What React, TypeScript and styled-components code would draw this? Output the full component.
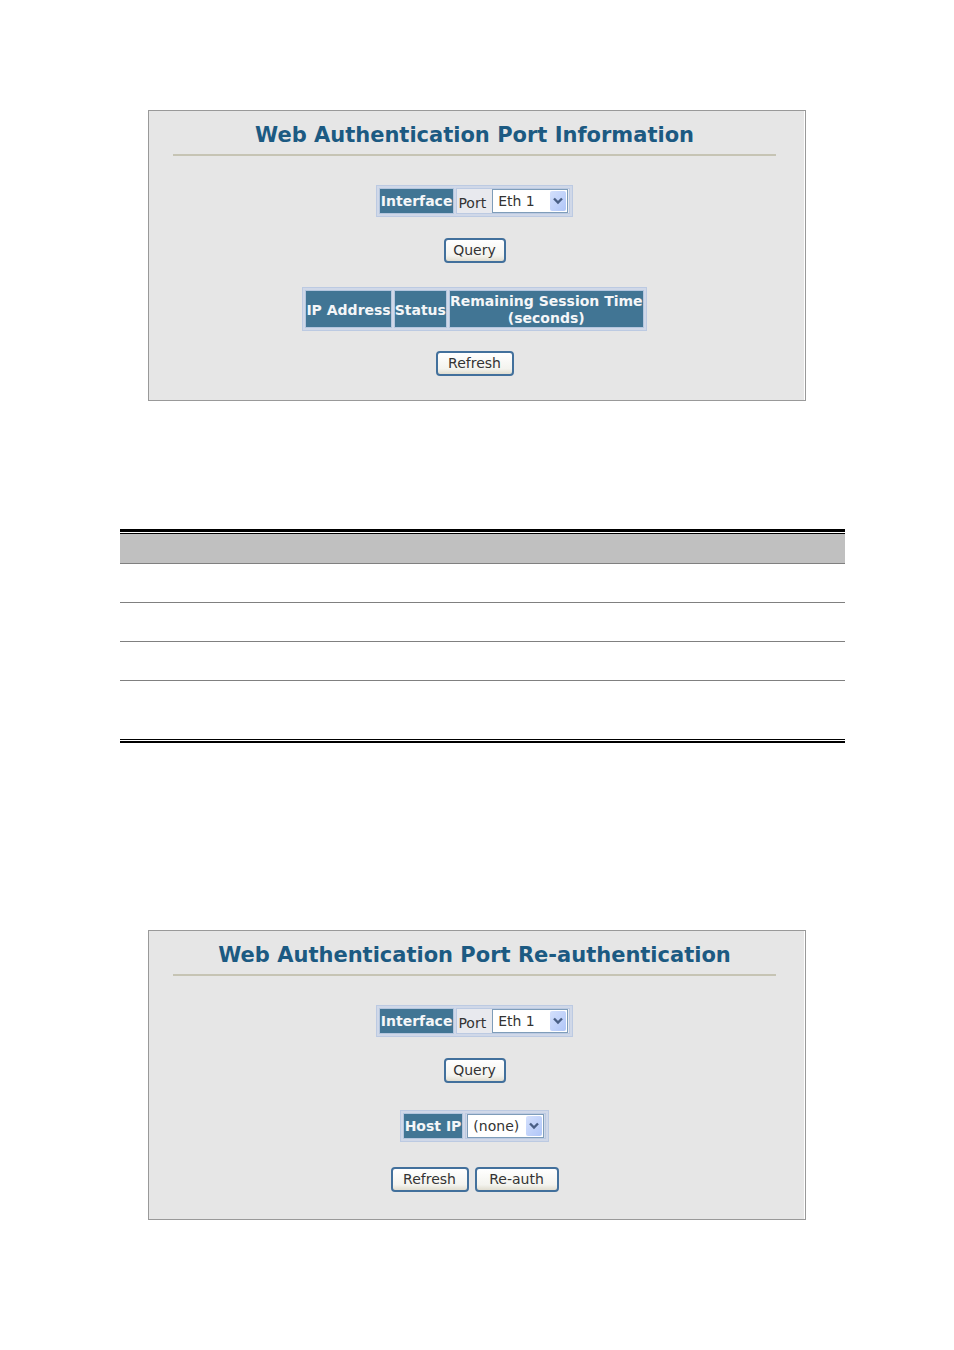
import React from "react";
import styled, { createGlobalStyle } from "styled-components";

const GlobalStyle = createGlobalStyle`
  * { box-sizing: border-box; }
  body {
    margin: 0;
    background: #fff;
    color: #333;
    font-family: "DejaVu Sans", Verdana, sans-serif;
    font-size: 14px;
    line-height: 17px;
  }
`;

const Page = styled.main`
  display: flex;
  flex-direction: column;
  padding: 110px 109px 130px 120px;
`;

const Panel = styled.section`
  display: flex;
  flex-direction: column;
  align-items: center;
  margin: 0 39px 0 28px;
  padding: 9px 29px 0 24px;
  border: 1px solid #999;
  background: #e6e6e6;
  box-shadow: inset -1px 0 #fff;
`;

const Title = styled.h1`
  align-self: stretch;
  margin: 0 0 29px;
  padding-bottom: 4px;
  border-bottom: 2px solid #c6c4b4;
  color: #1c5a82;
  font-size: 21px;
  line-height: 30px;
  text-align: center;
`;

const Grid = styled.table`
  border: 1px solid #bccae2;
  border-spacing: 2px;
  background: #d0d8e8;
`;

const HeadCell = styled.th`
  height: 26px;
  padding: 1px 1px 0;
  border: 1px solid #b4c6de;
  background: #417594;
  color: #f4f6f8;
  font-size: 14px;
  line-height: 17px;
  white-space: nowrap;

  &[scope="col"] { padding: 2px 0 0; }
`;

const FieldCell = styled.td<{ $plain?: boolean }>`
  padding: 0 1px;
  border: 1px solid #bccae2;
  background: ${(p) => (p.$plain ? "#d0d8e8" : "#e8e9ee")};
`;

const Field = styled.div`
  display: flex;
  align-items: center;
  gap: 6px;
`;

const FieldLabel = styled.label`
  padding-top: 4px;
`;

const SelectBox = styled.span`
  position: relative;
  display: flex;
`;

const Select = styled.select<{ $width: number }>`
  width: ${(p) => p.$width}px;
  height: 24px;
  padding: 0 0 0 5px;
  border: 1px solid #7f9db9;
  border-radius: 0;
  appearance: none;
  background: #fff;
  color: #333;
  font: inherit;
`;

const Arrow = styled.svg`
  position: absolute;
  top: 2px;
  right: 2px;
  pointer-events: none;
`;

const Buttons = styled.div<{ $top: number; $bottom: number }>`
  display: flex;
  gap: 6px;
  margin: ${(p) => p.$top}px 0 ${(p) => p.$bottom}px;
`;

const Button = styled.button<{ $width: number }>`
  width: ${(p) => p.$width}px;
  height: 25px;
  padding: 0;
  border: 2px solid #42709c;
  border-radius: 4px;
  background: linear-gradient(#fff, #f3f3ee 75%, #e0ddd0);
  color: #333;
  font: inherit;
`;

const DataTable = styled.table`
  width: 100%;
  margin: 128px 0 187px;
  border-top: 3px solid #000;
  border-bottom: 2px solid #000;
  border-spacing: 0;
`;

const DataHead = styled.th`
  height: 30px;
  padding: 0;
  border-top: 1px solid #000;
  background: #c0c0c0;
`;

const DataCell = styled.td<{ $height: number; $last?: boolean }>`
  height: ${(p) => p.$height}px;
  padding: 0;
  border-top: 1px solid #808080;
  border-bottom: ${(p) => (p.$last ? "1px solid #000" : "0")};
`;

const TableGap = styled.td`
  height: 1px;
  padding: 0;
`;

function DropDown({ id, label, width, value }: { id: string; label?: string; width: number; value: string }) {
  return (
    <SelectBox>
      <Select id={id} aria-label={label} $width={width} defaultValue={value}>
        <option>{value}</option>
      </Select>
      <Arrow width="16" height="20" viewBox="0 0 16 20" aria-hidden="true">
        <defs>
          <linearGradient id={`${id}-face`} x1="0" y1="0" x2="1" y2="1">
            <stop offset="0" stopColor="#d4e0fc" />
            <stop offset="1" stopColor="#b0c6f8" />
          </linearGradient>
        </defs>
        <rect width="16" height="20" rx="2" fill={`url(#${id}-face)`} />
        <path d="M4 7.5 8 11.5 12 7.5" fill="none" stroke="#4a5f85" strokeWidth="2.4" />
      </Arrow>
    </SelectBox>
  );
}

function InterfaceForm({ id }: { id: string }) {
  return (
    <Grid>
      <tbody>
        <tr>
          <HeadCell scope="row">Interface</HeadCell>
          <FieldCell>
            <Field>
              <FieldLabel htmlFor={id}>Port</FieldLabel>
              <DropDown id={id} width={76} value="Eth 1" />
            </Field>
          </FieldCell>
        </tr>
      </tbody>
    </Grid>
  );
}

export default function App() {
  return (
    <>
      <GlobalStyle />
      <Page>
        <Panel>
          <Title>Web Authentication Port Information</Title>
          <InterfaceForm id="info-port" />
          <Buttons $top={21} $bottom={24}>
            <Button type="button" $width={62}>Query</Button>
          </Buttons>
          <Grid>
            <thead>
              <tr>
                <HeadCell scope="col">IP Address</HeadCell>
                <HeadCell scope="col">Status</HeadCell>
                <HeadCell scope="col">
                  Remaining Session Time
                  <br />
                  (seconds)
                </HeadCell>
              </tr>
            </thead>
          </Grid>
          <Buttons $top={20} $bottom={24}>
            <Button type="button" $width={78}>Refresh</Button>
          </Buttons>
        </Panel>

        <DataTable>
          <thead>
            <tr>
              <TableGap colSpan={2} />
            </tr>
            <tr>
              <DataHead scope="col" />
              <DataHead scope="col" />
            </tr>
          </thead>
          <tbody>
            {[39, 39, 39, 60].map((height, i) => (
              <tr key={i}>
                <DataCell $height={height} $last={i === 3} />
                <DataCell $height={height} $last={i === 3} />
              </tr>
            ))}
            <tr>
              <TableGap colSpan={2} />
            </tr>
          </tbody>
        </DataTable>

        <Panel>
          <Title>Web Authentication Port Re-authentication</Title>
          <InterfaceForm id="reauth-port" />
          <Buttons $top={21} $bottom={27}>
            <Button type="button" $width={62}>Query</Button>
          </Buttons>
          <Grid>
            <tbody>
              <tr>
                <HeadCell scope="row">Host IP</HeadCell>
                <FieldCell $plain>
                  <DropDown id="host-ip" label="Host IP" width={77} value="(none)" />
                </FieldCell>
              </tr>
            </tbody>
          </Grid>
          <Buttons $top={25} $bottom={27}>
            <Button type="button" $width={78}>Refresh</Button>
            <Button type="button" $width={84}>Re-auth</Button>
          </Buttons>
        </Panel>
      </Page>
    </>
  );
}
